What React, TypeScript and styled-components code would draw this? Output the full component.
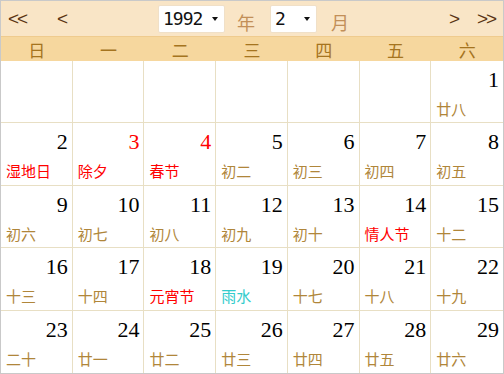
import React from "react";
import styled, { createGlobalStyle } from "styled-components";

const Global = createGlobalStyle`
  html, body { margin: 0; padding: 0; background: #fff; }
  body { font-family: "Noto Sans CJK SC", "Liberation Sans", sans-serif; }
`;

const Frame = styled.div`
  width: 504px;
  height: 374px;
  box-sizing: border-box;
  border: 1px solid #c9c9c9;
  display: flex;
  flex-direction: column;
  overflow: hidden;
`;

const Toolbar = styled.div`
  height: 35px;
  background: #f9e5c6;
  display: flex;
  align-items: center;
  padding: 0 6px 0 7px;
  box-sizing: border-box;
`;

const NavBtn = styled.span<{ $w: number }>`
  width: ${(p) => p.$w}px;
  flex: none;
  font-family: "Liberation Sans", sans-serif;
  font-size: 19px;
  color: #5a3414;
  letter-spacing: -2px;
  line-height: 1;
  display: inline-flex;
  align-items: center;
  height: 20px;
  cursor: pointer;
`;

const Spacer = styled.div`
  flex: 1;
`;

const SelectBox = styled.div<{ $w: number }>`
  width: ${(p) => p.$w}px;
  flex: none;
  height: 28px;
  box-sizing: border-box;
  background: #fff;
  border: 1px solid #f0e0c8;
  border-radius: 2px;
  display: flex;
  align-items: center;
  padding: 0 6px 0 4px;
  font-family: "DejaVu Sans Mono", "Liberation Mono", monospace;
  font-size: 18px;
  color: #111;
`;

const SelectText = styled.span`
  flex: 1;
  letter-spacing: -1px;
`;

const Caret = styled.span`
  width: 0;
  height: 0;
  border-left: 3.5px solid transparent;
  border-right: 3.5px solid transparent;
  border-top: 4px solid #111;
`;

const Unit = styled.span<{ $ml: number; $mr: number }>`
  margin-left: ${(p) => p.$ml}px;
  margin-right: ${(p) => p.$mr}px;
  font-size: 18px;
  color: #c28f58;
  line-height: 1;
  padding-top: 6px;
`;

const WeekRow = styled.div`
  height: 25px;
  background: #f6d79e;
  border-top: 1px solid #efcb8e;
  display: grid;
  grid-template-columns: repeat(7, 1fr);
  align-items: center;
  box-sizing: border-box;
`;

const WeekCell = styled.div`
  text-align: center;
  font-size: 17px;
  color: #a5741f;
  line-height: 1;
`;

const Grid = styled.div`
  flex: 1;
  display: grid;
  grid-template-columns: repeat(7, 1fr);
  grid-template-rows: repeat(5, 1fr);
`;

const Cell = styled.div<{ $lastCol: boolean; $lastRow: boolean }>`
  border-right: ${(p) => (p.$lastCol ? "none" : "1px solid #e8dfc4")};
  border-bottom: ${(p) => (p.$lastRow ? "none" : "1px solid #e8dfc4")};
  display: flex;
  flex-direction: column;
  padding: 8px 4px 0 5px;
  box-sizing: border-box;
  min-width: 0;
`;

const DayNum = styled.div<{ $red: boolean }>`
  text-align: right;
  font-family: "Liberation Serif", serif;
  font-size: 22px;
  line-height: 22px;
  color: ${(p) => (p.$red ? "#ff0000" : "#000")};
`;

const Lunar = styled.div<{ $color: string }>`
  margin-top: 9px;
  font-size: 15px;
  line-height: 18px;
  color: ${(p) => p.$color};
  white-space: nowrap;
`;

type Day = { d: number; l: string; kind?: "red" | "term"; redNum?: boolean };

const days: Day[] = [
  { d: 1, l: "廿八" },
  { d: 2, l: "湿地日", kind: "red" },
  { d: 3, l: "除夕", kind: "red", redNum: true },
  { d: 4, l: "春节", kind: "red", redNum: true },
  { d: 5, l: "初二" },
  { d: 6, l: "初三" },
  { d: 7, l: "初四" },
  { d: 8, l: "初五" },
  { d: 9, l: "初六" },
  { d: 10, l: "初七" },
  { d: 11, l: "初八" },
  { d: 12, l: "初九" },
  { d: 13, l: "初十" },
  { d: 14, l: "情人节", kind: "red" },
  { d: 15, l: "十二" },
  { d: 16, l: "十三" },
  { d: 17, l: "十四" },
  { d: 18, l: "元宵节", kind: "red" },
  { d: 19, l: "雨水", kind: "term" },
  { d: 20, l: "十七" },
  { d: 21, l: "十八" },
  { d: 22, l: "十九" },
  { d: 23, l: "二十" },
  { d: 24, l: "廿一" },
  { d: 25, l: "廿二" },
  { d: 26, l: "廿三" },
  { d: 27, l: "廿四" },
  { d: 28, l: "廿五" },
  { d: 29, l: "廿六" },
];

const weekdays = ["日", "一", "二", "三", "四", "五", "六"];

const colorOf = (k?: string) =>
  k === "red" ? "#ff0000" : k === "term" ? "#33cccc" : "#b0863a";

export default function App() {
  const cells: (Day | null)[] = [...Array(6).fill(null), ...days];
  return (
    <>
      <Global />
      <Frame>
        <Toolbar>
          <NavBtn $w={49}>&lt;&lt;</NavBtn>
          <NavBtn $w={101}>&lt;</NavBtn>
          <SelectBox $w={67}>
            <SelectText>1992</SelectText>
            <Caret />
          </SelectBox>
          <Unit $ml={12} $mr={15}>年</Unit>
          <SelectBox $w={47}>
            <SelectText>2</SelectText>
            <Caret />
          </SelectBox>
          <Unit $ml={14} $mr={0}>月</Unit>
          <Spacer />
          <NavBtn $w={28}>&gt;</NavBtn>
          <NavBtn $w={20}>&gt;&gt;</NavBtn>
        </Toolbar>
        <WeekRow>
          {weekdays.map((w) => (
            <WeekCell key={w}>{w}</WeekCell>
          ))}
        </WeekRow>
        <Grid>
          {cells.map((c, i) => (
            <Cell key={i} $lastCol={i % 7 === 6} $lastRow={i >= 28}>
              {c && (
                <>
                  <DayNum $red={!!c.redNum}>{c.d}</DayNum>
                  <Lunar $color={colorOf(c.kind)}>{c.l}</Lunar>
                </>
              )}
            </Cell>
          ))}
        </Grid>
      </Frame>
    </>
  );
}
